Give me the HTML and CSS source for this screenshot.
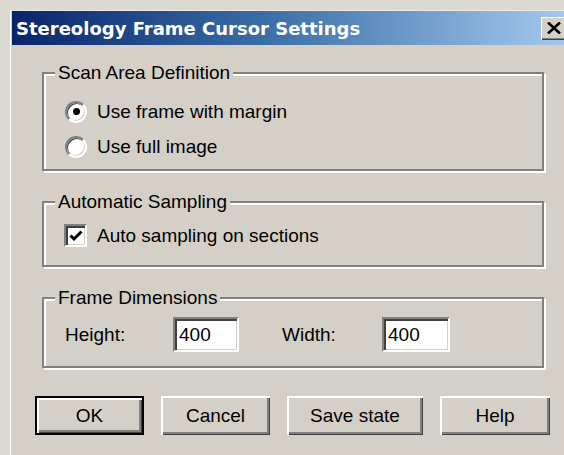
FILE: index.html
```html
<!DOCTYPE html>
<html lang="en">
<head>
<meta charset="utf-8">
<title>Stereology Frame Cursor Settings</title>
<link rel="stylesheet" href="styles.css">
</head>
<body>
<div class="dialog">
  <div class="titlebar">
    <span class="title">Stereology Frame Cursor Settings</span>
    <button class="close" aria-label="Close">
      <svg width="14" height="12" viewBox="0 0 14 12"><path d="M1 0.5 L13 11.5 M13 0.5 L1 11.5" stroke="#000" stroke-width="2.6" fill="none"/></svg>
    </button>
  </div>
  <div class="content">
    <fieldset class="group scan">
      <legend>Scan Area Definition</legend>
      <label class="option"><span class="radio checked"></span>Use frame with margin</label>
      <label class="option"><span class="radio"></span>Use full image</label>
    </fieldset>
    <fieldset class="group sampling">
      <legend>Automatic Sampling</legend>
      <label class="option"><span class="check"><svg width="16" height="16" viewBox="0 0 16 16"><path d="M2.5 7.5 L6 11 L13.5 3.5" stroke="#000" stroke-width="3" fill="none"/></svg></span>Auto sampling on sections</label>
    </fieldset>
    <fieldset class="group dims">
      <legend>Frame Dimensions</legend>
      <div class="dim-row">
        <span class="dim-label height">Height:</span>
        <span class="field">400</span>
        <span class="dim-label width">Width:</span>
        <span class="field wide">400</span>
      </div>
    </fieldset>
  </div>
  <div class="buttons">
    <button class="btn default">OK</button>
    <button class="btn">Cancel</button>
    <button class="btn save">Save state</button>
    <button class="btn help">Help</button>
  </div>
</div>
</body>
</html>
```
FILE: styles.css
```css
html, body {
  margin: 0;
  padding: 0;
  overflow: hidden;
  background: #dcd9d3;
  height: 100%;
}

body {
  font-family: "Liberation Sans", Arial, sans-serif;
  font-size: 19px;
  color: #000;
}

.dialog {
  margin: 10px 0 0 10px;
  width: 580px;
  height: 460px;
  background: #d4d0c8;
  border-top: 1px solid #ecebe8;
  border-left: 1px solid #fff;
  padding-left: 1px;
}

/* caption bar */
.titlebar {
  width: 560px;
  height: 34px;
  display: flex;
  align-items: center;
  background: linear-gradient(to right, #0a246a 0%, #3a6ea5 45%, #a6caf0 100%);
}

.title {
  flex: 1;
  padding-left: 4px;
  font-family: "DejaVu Sans", Verdana, sans-serif;
  font-weight: bold;
  font-size: 18px;
  color: #fff;
  white-space: nowrap;
}

.close {
  width: 25px;
  height: 23px;
  margin-right: 6px;
  padding: 0;
  border: none;
  background: #d4d0c8;
  box-shadow: inset 1px 1px #fff, inset -1px -1px #404040, inset -2px -2px #808080;
  display: flex;
  align-items: center;
  justify-content: center;
}

.content {
  padding: 17px 0 0 30px;
}

/* etched group boxes */
.group {
  width: 502px;
  box-sizing: border-box;
  margin: 0 0 20px 0;
  padding: 0 0 0 21px;
  border: 2px solid #808080;
  box-shadow: inset 2px 2px 0 #fff, 2px 2px 0 #fff;
}

.group legend {
  margin-left: -10px;
  padding: 0 3px;
  line-height: 22px;
  background: #d4d0c8;
}

.scan { padding-top: 10px; padding-bottom: 5px; }
.sampling { padding-top: 5px; padding-bottom: 12px; }
.dims { padding-top: 8px; padding-bottom: 14px; margin-bottom: 0; }

.option {
  display: flex;
  align-items: center;
  gap: 10px;
  height: 35px;
  white-space: nowrap;
}

.radio {
  box-sizing: border-box;
  width: 22px;
  height: 22px;
  border-radius: 50%;
  border: 2px solid;
  border-color: #808080 #fff #fff #808080;
  background: #fff;
  box-shadow: inset 1px 1px 0 #404040, inset -1px -1px 0 #d4d0c8;
  display: flex;
  align-items: center;
  justify-content: center;
}

.radio.checked::after {
  content: "";
  width: 7px;
  height: 7px;
  border-radius: 50%;
  background: #000;
}

.check {
  box-sizing: border-box;
  width: 23px;
  height: 23px;
  margin-left: -1px;
  border: 2px solid;
  border-color: #808080 #fff #fff #808080;
  background: #fff;
  box-shadow: inset 2px 2px 0 #404040, inset -1px -1px 0 #d4d0c8;
  display: flex;
  align-items: center;
  justify-content: center;
  padding: 1px 0 0 1px;
}

.dim-row {
  display: flex;
  align-items: center;
  height: 35px;
}

.dim-label.height { width: 108px; }
.dim-label.width { width: 100px; margin-left: 43px; }

.field {
  box-sizing: border-box;
  width: 66px;
  height: 35px;
  padding: 0 0 0 3px;
  line-height: 31px;
  background: #fff;
  border: 2px solid;
  border-color: #808080 #fff #fff #808080;
  box-shadow: inset 2px 2px 0 #404040, inset -1px -1px 0 #d4d0c8;
  padding-left: 4px;
}

.field.wide { width: 68px; }

/* push buttons */
.buttons {
  display: flex;
  gap: 17px;
  padding: 28px 0 0 23px;
}

.btn {
  box-sizing: border-box;
  width: 109px;
  height: 39px;
  padding: 0;
  border: none;
  background: #d4d0c8;
  font-family: "Liberation Sans", Arial, sans-serif;
  font-size: 19px;
  color: #000;
  box-shadow: inset 2px 2px 0 #fff, inset -1px -1px 0 #404040, inset -3px -3px 0 #808080;
}

.btn.default {
  border: 2px solid #000;
  box-shadow: inset 2px 2px 0 #fff, inset -1px -1px 0 #404040, inset -3px -3px 0 #808080;
}

.btn.save { width: 136px; }
.btn.help { width: 110px; }
```
